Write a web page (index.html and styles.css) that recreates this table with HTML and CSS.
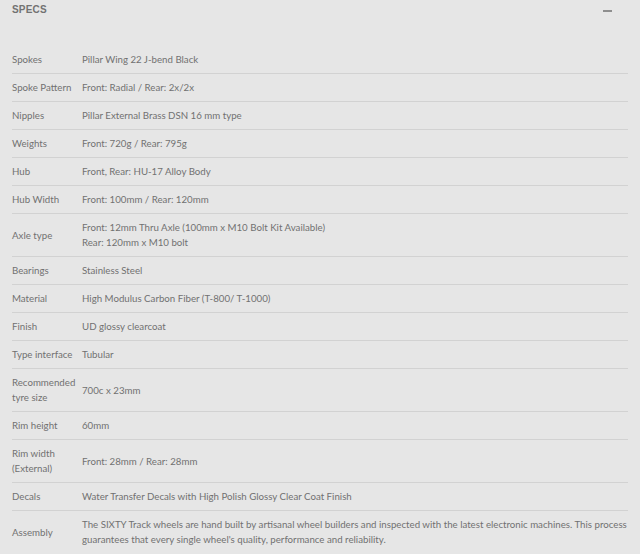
FILE: index.html
```html
<!DOCTYPE html>
<html lang="en">
<head>
    <meta charset="UTF-8">
    <meta name="viewport" content="width=device-width, initial-scale=1.0">
    <title>Specs</title>
    <link rel="stylesheet" href="styles.css">
</head>
<body>
    <div class="specs">
        <div class="specs-header">
            <h2>SPECS</h2>
            <span class="toggle"></span>
        </div>

        <table class="spec-table">
            <tr><td class="label">Spokes</td><td>Pillar Wing 22 J-bend Black</td></tr>
            <tr><td class="label">Spoke Pattern</td><td>Front: Radial / Rear: 2x/2x</td></tr>
            <tr><td class="label">Nipples</td><td>Pillar External Brass DSN 16 mm type</td></tr>
            <tr><td class="label">Weights</td><td>Front: 720g / Rear: 795g</td></tr>
            <tr><td class="label">Hub</td><td>Front, Rear: HU-17 Alloy Body</td></tr>
            <tr><td class="label">Hub Width</td><td>Front: 100mm / Rear: 120mm</td></tr>
            <tr><td class="label">Axle type</td><td>Front: 12mm Thru Axle (100mm x M10 Bolt Kit Available)<br>Rear: 120mm x M10 bolt</td></tr>
            <tr><td class="label">Bearings</td><td>Stainless Steel</td></tr>
            <tr><td class="label">Material</td><td>High Modulus Carbon Fiber (T-800/ T-1000)</td></tr>
            <tr><td class="label">Finish</td><td>UD glossy clearcoat</td></tr>
            <tr><td class="label">Type interface</td><td>Tubular</td></tr>
            <tr><td class="label">Recommended tyre size</td><td>700c x 23mm</td></tr>
            <tr><td class="label">Rim height</td><td>60mm</td></tr>
            <tr><td class="label">Rim width (External)</td><td>Front: 28mm / Rear: 28mm</td></tr>
            <tr><td class="label">Decals</td><td>Water Transfer Decals with High Polish Glossy Clear Coat Finish</td></tr>
            <tr><td class="label">Assembly</td><td>The SIXTY Track wheels are hand built by artisanal wheel builders and inspected with the latest electronic machines. This process guarantees that every single wheel's quality, performance and reliability.</td></tr>
        </table>
    </div>
</body>
</html>
```

FILE: styles.css
```css
body {
    margin: 0;
    background-color: #e6e6e6;
    font-family: Lato, "Open Sans", sans-serif;
    color: #717171;
}
.specs {
    padding: 0 12px;
}
.specs-header {
    display: flex;
    justify-content: space-between;
    align-items: flex-start;
    height: 46px;
}
.specs-header h2 {
    margin: 4px 0 0;
    font-family: "Liberation Sans", Arial, sans-serif;
    font-size: 10px;
    font-weight: bold;
    color: #727272;
    letter-spacing: 0.2px;
}
.toggle {
    width: 9px;
    height: 2px;
    margin: 10px 16px 0 0;
    background-color: #8e8e8e;
}
.spec-table {
    width: 616px;
    border-collapse: collapse;
    font-size: 9.7px;
    line-height: 15px;
}
.spec-table td {
    padding: 6px 0;
    border-bottom: 1px solid #d2d2d2;
    vertical-align: middle;
}
.spec-table td.label {
    width: 66px;
    padding-right: 4px;
}
.spec-table tr:last-child td {
    border-bottom: none;
}
```
